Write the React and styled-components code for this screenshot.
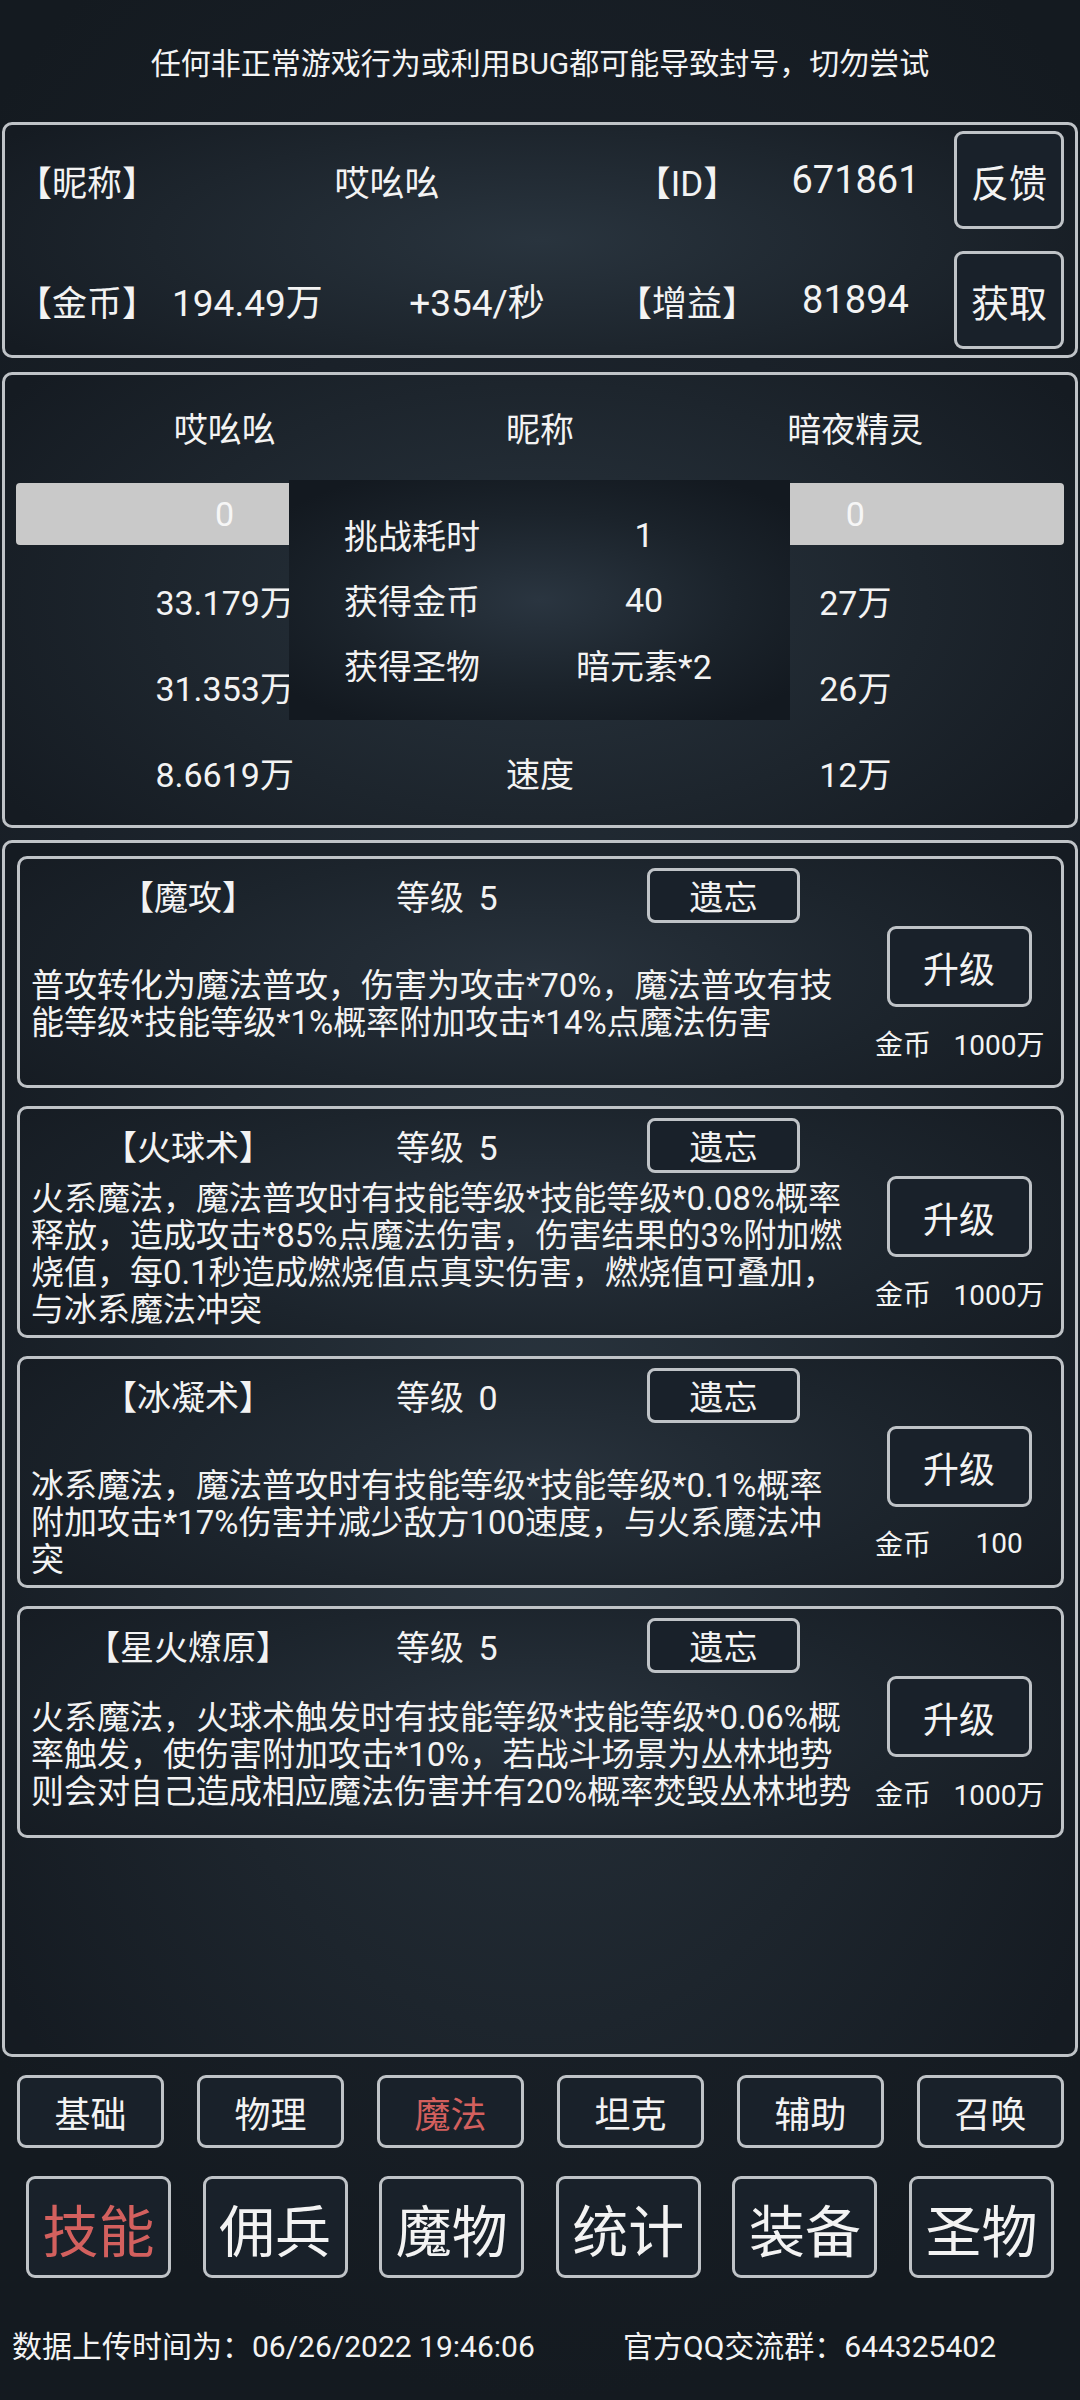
import React from 'react';
import styled, { createGlobalStyle } from 'styled-components';

const FONT = `Roboto, "Noto Sans CJK SC", "Noto Sans", sans-serif`;
const LINE = '#bfc3c7';
const TEXT = '#f3f3f3';
const RED = '#d3605e';

const Global = createGlobalStyle`
  html, body { margin: 0; padding: 0; background: #161d24; }
  body { font-family: ${FONT}; color: ${TEXT}; }
  * { box-sizing: border-box; }
`;

const Page = styled.div`
  width: 1080px;
  height: 2400px;
  display: flex;
  flex-direction: column;
  overflow: hidden;
  background: radial-gradient(ellipse 75% 55% at 50% 45%, #232d36 0%, #1a2129 60%, #141a20 100%);
`;

const Notice = styled.div`
  height: 122px;
  display: flex;
  align-items: center;
  justify-content: center;
  font-size: 30px;
`;

const Panel = styled.section`
  position: relative;
  margin: ${(p) => p.$top || 0}px 2px 0;
  height: ${(p) => p.$h}px;
  border: 3px solid ${LINE};
  border-radius: 10px;
  background: radial-gradient(ellipse 60% 80% at 50% 50%, #29343e 0%, #1d252d 60%, #151b22 100%);
`;

/* ---------- info panel ---------- */
const InfoGrid = styled.div`
  display: grid;
  grid-template-columns: 140px 180px 280px 140px 197px 110px;
  grid-template-rows: 98px 98px;
  row-gap: 22px;
  padding: 6px 0 0 12px;
  align-items: center;
  font-size: 35px;
`;

const Cell = styled.div`
  grid-column: ${(p) => p.$col || 'auto'};
  text-align: ${(p) => p.$align || 'center'};
  padding-left: ${(p) => p.$pl || 0}px;
  white-space: nowrap;
  font-size: ${(p) => p.$fs || 35}px;
`;

const BoxButton = styled.div`
  width: ${(p) => p.$w}px;
  height: ${(p) => p.$h}px;
  border: 3px solid ${LINE};
  border-radius: ${(p) => p.$r || 9}px;
  display: flex;
  align-items: center;
  justify-content: center;
  font-size: ${(p) => p.$fs}px;
  color: ${(p) => (p.$active ? RED : TEXT)};
  background: #19212a;
  white-space: nowrap;
`;

/* ---------- battle panel ---------- */
const BattleBody = styled.div`
  padding: 12px 0 8px;
  display: flex;
  flex-direction: column;
  font-size: 34px;
`;

const TriRow = styled.div`
  display: grid;
  grid-template-columns: 1fr 1fr 1fr;
  padding: 0 62px;
  height: ${(p) => p.$h}px;
  align-items: center;
  text-align: center;
  white-space: nowrap;
`;

const HpBar = styled.div`
  display: grid;
  grid-template-columns: 1fr 1fr 1fr;
  align-items: center;
  text-align: center;
  height: 62px;
  margin: 16px 11px 12px;
  padding: 0 51px;
  border-radius: 4px;
  background: #c9c9c9;
  color: #f6f6f6;
  font-size: 34px;
`;

const ResultBox = styled.div`
  position: absolute;
  left: 284px;
  top: 105px;
  width: 501px;
  height: 240px;
  padding: 22px 0 0 55px;
  display: grid;
  grid-template-columns: 200px 200px;
  grid-auto-rows: 65px;
  align-items: center;
  font-size: 34px;
  background: radial-gradient(ellipse 65% 60% at 50% 50%, #2a3540 0%, #1b232b 60%, #131920 100%);
`;

const ResultValue = styled.div`
  text-align: center;
  white-space: nowrap;
`;

/* ---------- skills ---------- */
const SkillList = styled.div`
  display: flex;
  flex-direction: column;
  gap: 18px;
  padding: 13px 11px 0 12px;
`;

const Card = styled.div`
  height: 232px;
  border: 3px solid ${LINE};
  border-radius: 10px;
  padding-top: 9px;
  display: flex;
  flex-direction: column;
  background: radial-gradient(ellipse 60% 90% at 50% 50%, #28323c 0%, #1c242c 60%, #161c23 100%);
`;

const CardHead = styled.div`
  display: grid;
  grid-template-columns: 336px 291px 153px;
  height: 55px;
  align-items: center;
  font-size: 34px;
  white-space: nowrap;
`;

const SkillName = styled.div`
  text-align: center;
`;

const SkillLevel = styled.div`
  padding-left: 40px;
  word-spacing: 6px;
`;

const CardBody = styled.div`
  flex: 1;
  display: grid;
  grid-template-columns: 1fr 176px;
  padding-right: 14px;
`;

const Desc = styled.div`
  align-self: center;
  padding-left: 11px;
  font-size: 33px;
  line-height: 37px;
  white-space: nowrap;
`;

const Side = styled.div`
  display: flex;
  flex-direction: column;
  align-items: center;
  padding-top: 3px;
`;

const Cost = styled.div`
  align-self: flex-start;
  margin: 18px 0 0 4px;
  display: flex;
  align-items: center;
  height: 36px;
  font-size: 28px;
  white-space: nowrap;
`;

const CostValue = styled.span`
  width: 126px;
  margin-left: 5px;
  text-align: center;
`;

/* ---------- tabs ---------- */
const TabRow = styled.div`
  display: grid;
  grid-template-columns: repeat(6, ${(p) => p.$w}px);
  column-gap: ${(p) => p.$gap}px;
  margin-top: ${(p) => p.$top}px;
  padding-left: ${(p) => p.$pl}px;
`;

const Footer = styled.div`
  display: grid;
  grid-template-columns: 611px 1fr;
  margin-top: 44px;
  padding-left: 12px;
  height: 40px;
  align-items: center;
  font-size: 30px;
  white-space: nowrap;
`;

const skills = [
  {
    name: '【魔攻】',
    level: 5,
    cost: '1000万',
    lines: ['普攻转化为魔法普攻，伤害为攻击*70%，魔法普攻有技', '能等级*技能等级*1%概率附加攻击*14%点魔法伤害'],
  },
  {
    name: '【火球术】',
    level: 5,
    cost: '1000万',
    lines: [
      '火系魔法，魔法普攻时有技能等级*技能等级*0.08%概率',
      '释放，造成攻击*85%点魔法伤害，伤害结果的3%附加燃',
      '烧值，每0.1秒造成燃烧值点真实伤害，燃烧值可叠加，',
      '与冰系魔法冲突',
    ],
  },
  {
    name: '【冰凝术】',
    level: 0,
    cost: '100',
    lines: ['\u00a0', '冰系魔法，魔法普攻时有技能等级*技能等级*0.1%概率', '附加攻击*17%伤害并减少敌方100速度，与火系魔法冲', '突'],
  },
  {
    name: '【星火燎原】',
    level: 5,
    cost: '1000万',
    lines: [
      '火系魔法，火球术触发时有技能等级*技能等级*0.06%概',
      '率触发，使伤害附加攻击*10%，若战斗场景为丛林地势',
      '则会对自己造成相应魔法伤害并有20%概率焚毁丛林地势',
    ],
  },
];

const subTabs = ['基础', '物理', '魔法', '坦克', '辅助', '召唤'];
const mainTabs = ['技能', '佣兵', '魔物', '统计', '装备', '圣物'];

export default function App() {
  return (
    <Page>
      <Global />
      <Notice>任何非正常游戏行为或利用BUG都可能导致封号，切勿尝试</Notice>

      <Panel $h={236}>
        <InfoGrid>
          <Cell $align="left">【昵称】</Cell>
          <Cell $col="2 / 4">哎吆吆</Cell>
          <Cell>【ID】</Cell>
          <Cell $fs={38}>671861</Cell>
          <BoxButton $w={110} $h={98} $fs={38}>反馈</BoxButton>

          <Cell $align="left">【金币】</Cell>
          <Cell $align="left" $pl={15} $fs={37}>194.49万</Cell>
          <Cell $fs={37}>+354/秒</Cell>
          <Cell>【增益】</Cell>
          <Cell $fs={38}>81894</Cell>
          <BoxButton $w={110} $h={98} $fs={38}>获取</BoxButton>
        </InfoGrid>
      </Panel>

      <Panel $h={456} $top={14}>
        <BattleBody>
          <TriRow $h={80}>
            <div>哎吆吆</div>
            <div>昵称</div>
            <div>暗夜精灵</div>
          </TriRow>
          <HpBar>
            <div>0</div>
            <div />
            <div>0</div>
          </HpBar>
          <TriRow $h={86}>
            <div>33.179万</div>
            <div>攻击</div>
            <div>27万</div>
          </TriRow>
          <TriRow $h={86}>
            <div>31.353万</div>
            <div>防御</div>
            <div>26万</div>
          </TriRow>
          <TriRow $h={86}>
            <div>8.6619万</div>
            <div>速度</div>
            <div>12万</div>
          </TriRow>
        </BattleBody>
        <ResultBox>
          <div>挑战耗时</div>
          <ResultValue>1</ResultValue>
          <div>获得金币</div>
          <ResultValue>40</ResultValue>
          <div>获得圣物</div>
          <ResultValue>暗元素*2</ResultValue>
        </ResultBox>
      </Panel>

      <Panel $h={1217} $top={12}>
        <SkillList>
          {skills.map((s) => (
            <Card key={s.name}>
              <CardHead>
                <SkillName>{s.name}</SkillName>
                <SkillLevel>等级 {s.level}</SkillLevel>
                <BoxButton $w={153} $h={55} $fs={34} $r={8}>遗忘</BoxButton>
              </CardHead>
              <CardBody>
                <Desc>
                  {s.lines.map((l, i) => (
                    <div key={i}>{l}</div>
                  ))}
                </Desc>
                <Side>
                  <BoxButton $w={145} $h={81} $fs={36}>升级</BoxButton>
                  <Cost>
                    <span>金币</span>
                    <CostValue>{s.cost}</CostValue>
                  </Cost>
                </Side>
              </CardBody>
            </Card>
          ))}
        </SkillList>
      </Panel>

      <TabRow $w={147} $gap={33} $top={18} $pl={17}>
        {subTabs.map((t) => (
          <BoxButton key={t} $w={147} $h={73} $fs={36} $active={t === '魔法'}>
            {t}
          </BoxButton>
        ))}
      </TabRow>

      <TabRow $w={145} $gap={31.6} $top={28} $pl={26}>
        {mainTabs.map((t) => (
          <BoxButton key={t} $w={145} $h={102} $fs={56} $active={t === '技能'}>
            {t}
          </BoxButton>
        ))}
      </TabRow>

      <Footer>
        <span>数据上传时间为：06/26/2022 19:46:06</span>
        <span>官方QQ交流群：644325402</span>
      </Footer>
    </Page>
  );
}
